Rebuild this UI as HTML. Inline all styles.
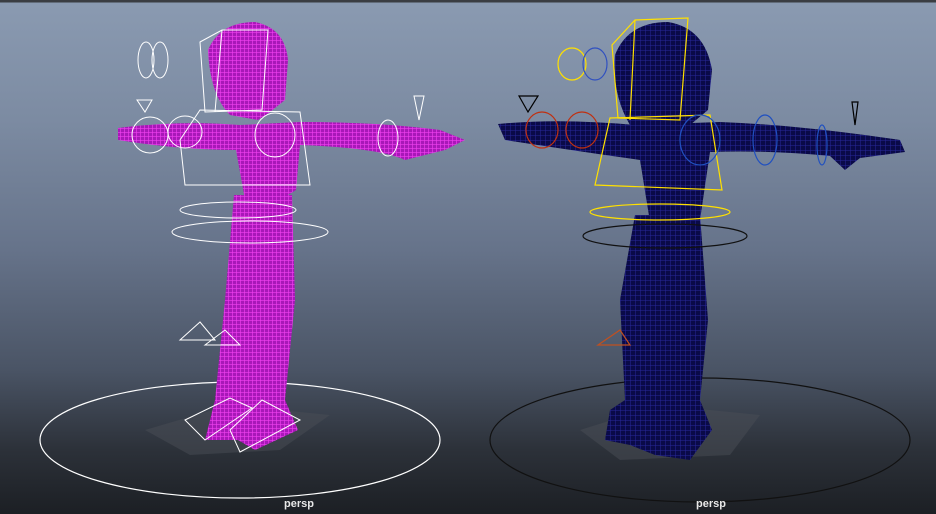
<!DOCTYPE html>
<html><head><meta charset="utf-8"><style>
html,body{margin:0;padding:0;width:936px;height:514px;overflow:hidden}
body{background:linear-gradient(180deg,#3a3d42 0px,#3a3d42 2px,#8a9ab1 3px,#7c8ba2 120px,#66738a 250px,#4a5465 370px,#2c3139 450px,#1c1f24 514px);font-family:"Liberation Sans",sans-serif}
.lbl{position:absolute;top:498px;color:#e8e8e8;font-size:11px;font-weight:bold}
</style></head><body>
<svg width="936" height="514" style="position:absolute;left:0;top:0">
<defs>
<pattern id="gm" width="4" height="4" patternUnits="userSpaceOnUse"><rect width="4" height="4" fill="#a818b8"/><path d="M0 0H4M0 0V4" stroke="#f040f0" stroke-width="1.3"/></pattern>
<pattern id="gb" width="5" height="5" patternUnits="userSpaceOnUse"><rect width="5" height="5" fill="#0a0a48"/><path d="M0 0H5M0 0V5" stroke="#28289a" stroke-width="1"/></pattern>
</defs>
<ellipse cx="240" cy="440" rx="200" ry="58" fill="none" stroke="#fff" stroke-width="1.2"/>
<polygon points="145,430 230,405 330,415 280,450 190,455" fill="#4a4e56" opacity=".5"/>
<g fill="url(#gm)">
<path d="M208,50 Q220,22 255,22 Q285,28 288,60 L285,100 L270,112 L258,120 L230,115 Q210,95 208,50Z"/>
<path d="M118,128 Q180,120 240,125 L300,122 Q380,122 440,130 L465,140 L445,150 L405,160 Q380,148 300,145 L296,190 L280,200 L245,200 L236,150 Q180,150 118,140Z"/>
<path d="M234,195 L292,195 L295,300 L285,400 L298,430 L255,450 L238,440 L205,440 L215,400 L225,300Z"/>
</g>
<g fill="none" stroke="#fff" stroke-width="1">
<path d="M200,42 L222,30 L268,30 L262,110 L205,112Z M222,30 L215,112"/>
<ellipse cx="146" cy="60" rx="8" ry="18"/><ellipse cx="160" cy="60" rx="8" ry="18"/>
<path d="M137,100 L152,100 L145,112Z M414,96 L424,96 L419,120Z"/>
<ellipse cx="150" cy="135" rx="18" ry="18"/><ellipse cx="185" cy="132" rx="17" ry="16"/>
<ellipse cx="388" cy="138" rx="10" ry="18"/><ellipse cx="275" cy="135" rx="20" ry="22"/>
<path d="M180,140 L200,110 L300,112 L310,185 L185,185Z"/>
<ellipse cx="238" cy="210" rx="58" ry="8"/>
<ellipse cx="250" cy="232" rx="78" ry="11"/>
<path d="M180,340 L200,322 L215,340Z M205,345 L225,330 L240,345Z"/>
<path d="M185,420 L230,398 L252,408 L205,440Z M230,430 L262,400 L300,420 L240,452Z"/>
</g>
<ellipse cx="700" cy="440" rx="210" ry="62" fill="none" stroke="#111" stroke-width="1.2"/>
<polygon points="580,430 660,405 760,415 730,455 620,460" fill="#4a4e56" opacity=".5"/>
<g fill="url(#gb)">
<path d="M615,55 Q628,22 668,22 Q705,28 712,70 L708,110 L690,125 L665,130 L630,125 Q612,95 615,55Z"/>
<path d="M498,124 Q560,118 635,125 L720,122 Q800,125 900,140 L905,152 L860,158 L845,170 L830,156 Q770,150 710,152 L700,220 L650,222 L640,160 Q570,150 505,140Z"/>
<path d="M635,215 L700,215 L708,320 L700,400 L712,430 L690,460 L655,455 L630,445 L605,440 L610,410 L625,400 L620,300Z"/>
</g>
<g fill="none" stroke-width="1.2">
<g stroke="#ffe000">
<path d="M612,45 L635,20 L688,18 L680,120 L618,118Z M635,20 L630,120"/>
<ellipse cx="572" cy="64" rx="14" ry="16"/>
<path d="M595,185 L610,118 L710,115 L722,190Z"/>
<ellipse cx="660" cy="212" rx="70" ry="8"/>
</g>
<ellipse cx="665" cy="236" rx="82" ry="12" stroke="#111"/>
<ellipse cx="595" cy="64" rx="12" ry="16" stroke="#3050c0"/>
<g stroke="#c03010"><ellipse cx="542" cy="130" rx="16" ry="18"/><ellipse cx="582" cy="130" rx="16" ry="18"/></g>
<g stroke="#2050c0"><ellipse cx="765" cy="140" rx="12" ry="25"/><ellipse cx="822" cy="145" rx="5" ry="20"/><ellipse cx="700" cy="140" rx="20" ry="25"/></g>
<path d="M519,96 L538,96 L528,112Z M852,102 L858,102 L855,125Z" stroke="#000"/>
<path d="M598,345 L620,330 L630,345Z" stroke="#c05020"/>
</g>
</svg>
<div class="lbl" style="left:284px">persp</div>
<div class="lbl" style="left:696px">persp</div>
</body></html>
